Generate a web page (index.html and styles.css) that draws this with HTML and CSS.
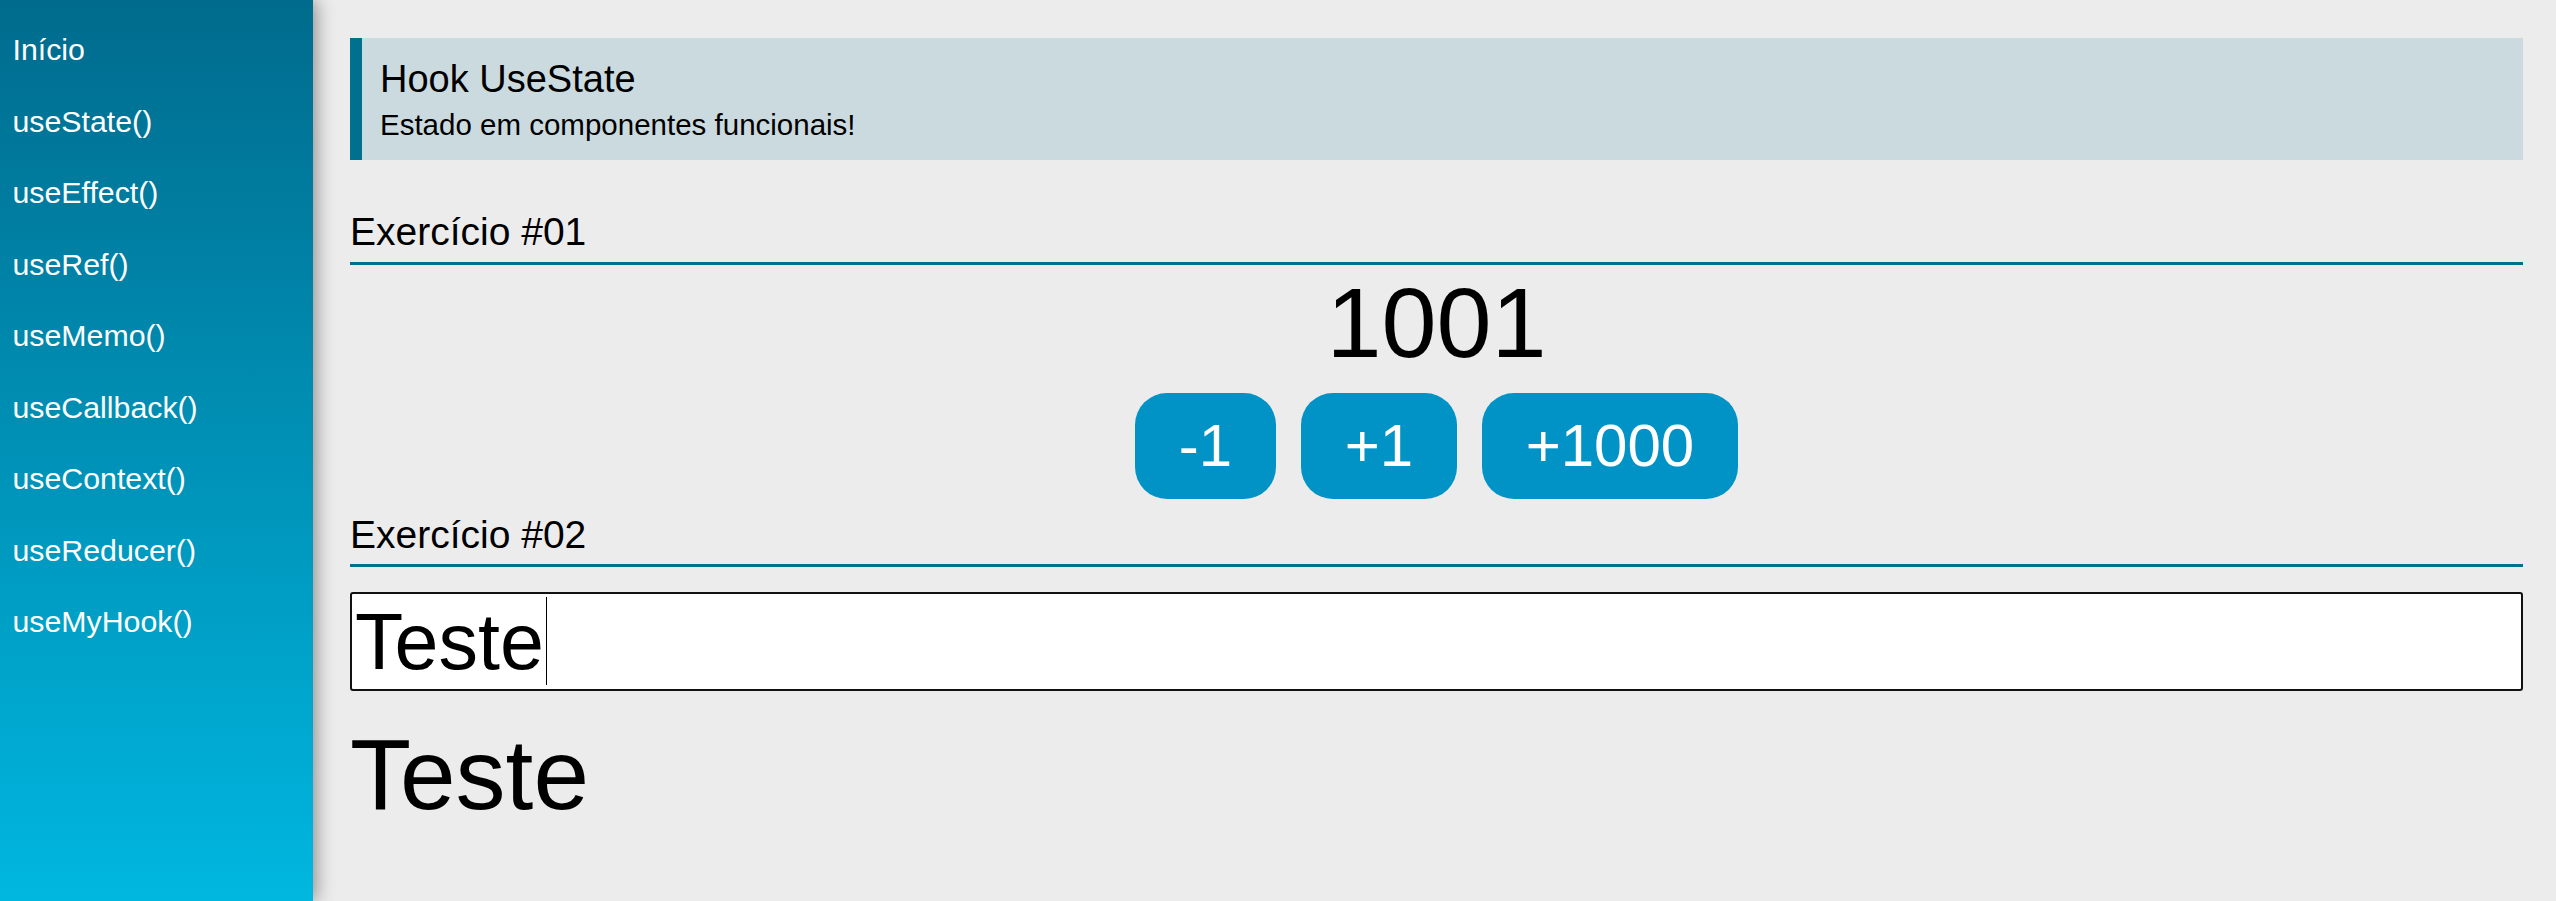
FILE: index.html
```html
<!DOCTYPE html>
<html lang="pt-BR">
<head>
<meta charset="utf-8">
<title>Hook UseState</title>
<link rel="stylesheet" href="styles.css">
</head>
<body>
  <aside class="menu">
    <nav class="menu-list">
      <a class="menu-item" href="#">Início</a>
      <a class="menu-item" href="#">useState()</a>
      <a class="menu-item" href="#">useEffect()</a>
      <a class="menu-item" href="#">useRef()</a>
      <a class="menu-item" href="#">useMemo()</a>
      <a class="menu-item" href="#">useCallback()</a>
      <a class="menu-item" href="#">useContext()</a>
      <a class="menu-item" href="#">useReducer()</a>
      <a class="menu-item" href="#">useMyHook()</a>
    </nav>
  </aside>
  <main class="content">
    <header class="page-title">
      <h1 class="page-title-main">Hook UseState</h1>
      <p class="page-title-sub">Estado em componentes funcionais!</p>
    </header>

    <h2 class="section-title">Exercício #01</h2>
    <div class="counter">
      <span class="counter-value">1001</span>
      <div class="counter-buttons">
        <button class="btn">-1</button>
        <button class="btn">+1</button>
        <button class="btn">+1000</button>
      </div>
    </div>

    <h2 class="section-title section-title-second">Exercício #02</h2>
    <div class="input-wrap">
      <input class="text-input" type="text" value="Teste">
      <span class="caret"></span>
    </div>
    <span class="text-output">Teste</span>
  </main>
</body>
</html>
```

FILE: styles.css
```css
* {
  box-sizing: border-box;
}

html, body {
  margin: 0;
  padding: 0;
}

body {
  display: flex;
  min-height: 901px;
  background: #ececec;
  font-family: "Liberation Sans", Arial, sans-serif;
  color: #000;
}

.menu {
  position: relative;
  z-index: 1;
  flex: 0 0 313px;
  width: 313px;
  min-height: 901px;
  background: linear-gradient(to bottom, #006b8d 0%, #00b7e0 100%);
  box-shadow: 2px 0 18px rgba(0, 0, 0, 0.45);
  padding-top: 14px;
}

.menu-list {
  display: flex;
  flex-direction: column;
}

.menu-item {
  display: block;
  height: 71.5px;
  line-height: 71.5px;
  padding-left: 12.5px;
  font-size: 30.3px;
  color: #fff;
  text-decoration: none;
}

.content {
  flex: 1;
  display: flex;
  flex-direction: column;
  padding: 38px 33px 0 37px;
}

.page-title {
  border-left: 12px solid #00708f;
  background: #cbdadf;
  padding: 17.5px 18px 17.2px;
  height: 122px;
}

.page-title-main {
  margin: 0 0 5.3px;
  font-size: 38px;
  line-height: 46px;
  font-weight: normal;
}

.page-title-sub {
  margin: 0;
  font-size: 29.5px;
  line-height: 36px;
}

.section-title {
  margin: 49px 0 0;
  padding-bottom: 6.6px;
  border-bottom: 3px solid #00708f;
  font-size: 39px;
  line-height: 46px;
  font-weight: normal;
}

.section-title-second {
  margin-top: 13px;
}

.counter {
  display: flex;
  flex-direction: column;
  align-items: center;
}

.counter-value {
  font-size: 99px;
  line-height: 116px;
}

.counter-buttons {
  display: flex;
  gap: 25.5px;
  margin-top: 12px;
}

.btn {
  height: 106px;
  padding: 0 43.5px;
  border: none;
  border-radius: 32px;
  background: #0193c6;
  color: #fff;
  font-family: "Liberation Sans", Arial, sans-serif;
  font-size: 60px;
  line-height: 69px;
}

.input-wrap {
  position: relative;
  margin-top: 25px;
}

.text-input {
  display: block;
  height: 99px;
  width: 100%;
  padding: 0 3px;
  border: 2px solid #111;
  border-radius: 3px;
  outline: none;
  background: #fff;
  font-family: "Liberation Sans", Arial, sans-serif;
  font-size: 79px;
  color: #000;
}

.caret {
  position: absolute;
  left: 196px;
  top: 5px;
  width: 1px;
  height: 88px;
  background: #000;
}

.text-output {
  margin-top: 25.4px;
  font-size: 100px;
  line-height: 115px;
}
```
